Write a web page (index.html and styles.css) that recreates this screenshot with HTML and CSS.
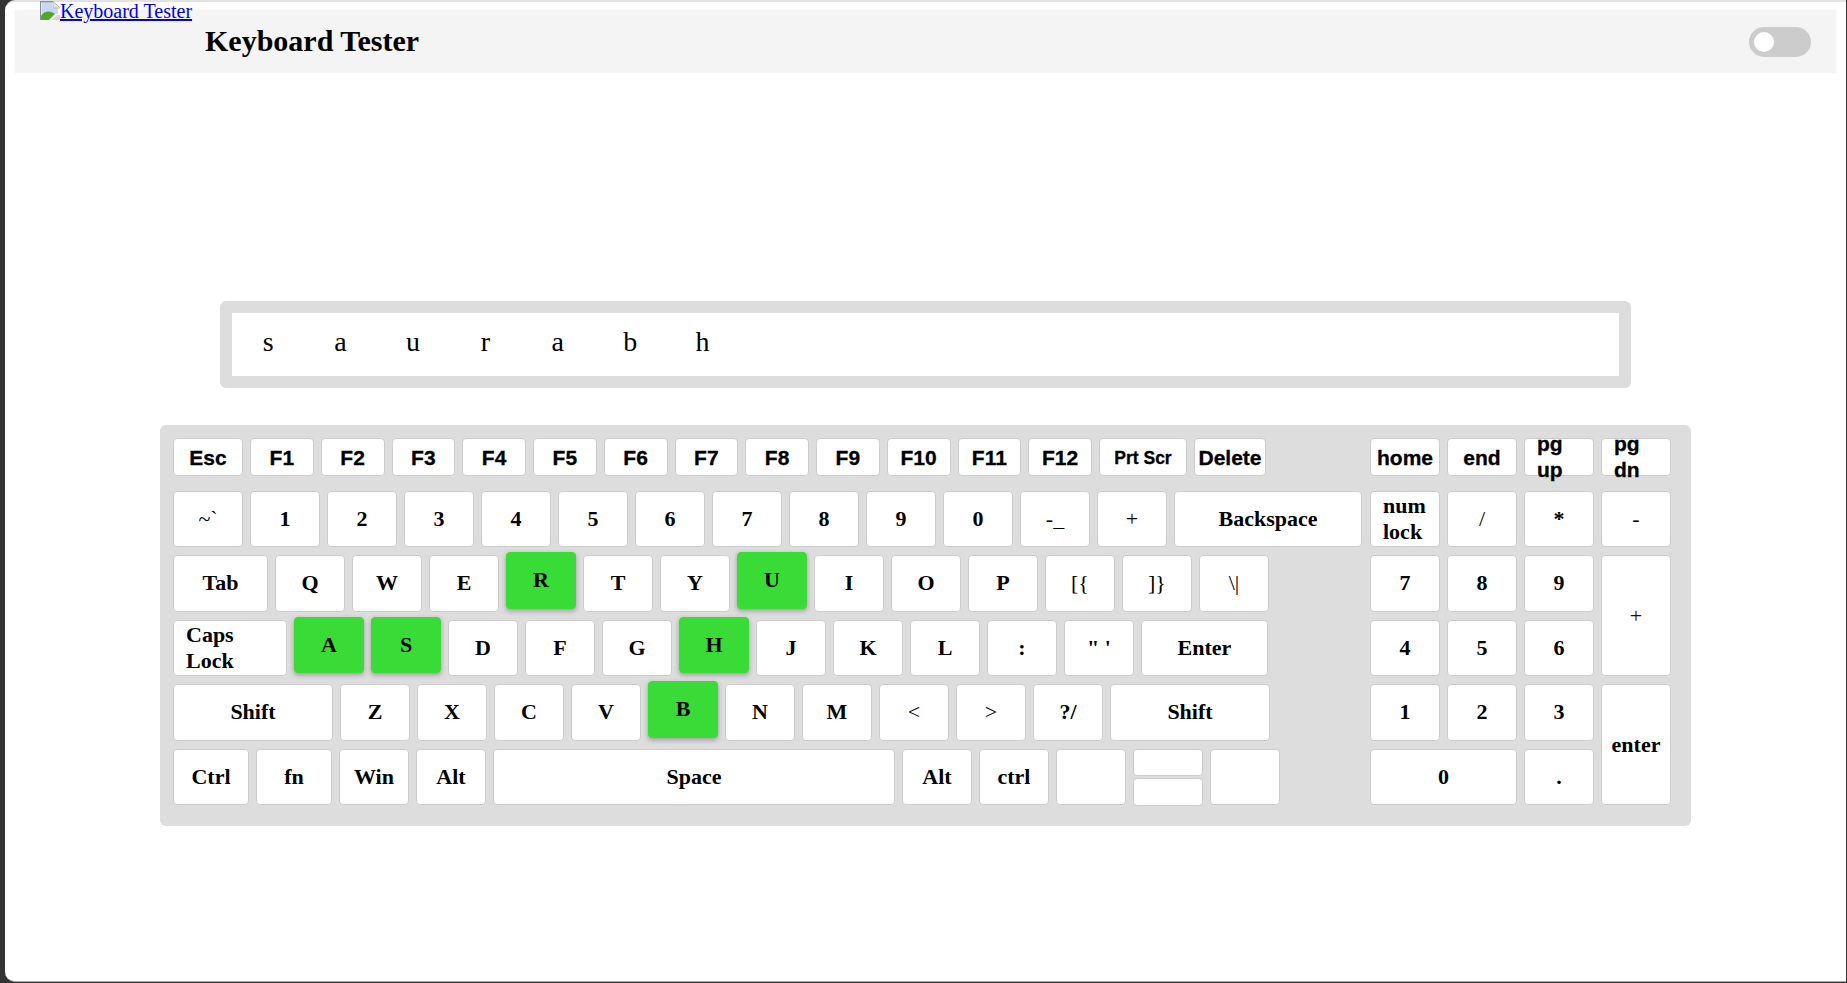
FILE: index.html
```html
<!DOCTYPE html>
<html lang="en">
<head>
    <meta charset="UTF-8">
    <meta name="viewport" content="width=device-width, initial-scale=1.0">
    <title>Keyboard Tester</title>
    <link rel="stylesheet" href="styles.css">
</head>
<body>
    <div class="window">
        <a class="logo" href="#">
            <svg class="broken-img" width="20" height="19" viewBox="0 0 20 19">
                <path d="M0 0H13L20 7V19H0Z" fill="#fff"/>
                <path d="M2 1H12V7H18V13H2Z" fill="#c6d8f5"/>
                <path d="M13 0V7H20Z" fill="#e4e4e4" stroke="#b0b0b0" stroke-width="0.8"/>
                <path d="M1 19V15C5 9 11 10 15 13L9 19Z" fill="#4fa82c"/>
                <path d="M11 19L17 14H20V19Z" fill="#d8d8d8"/>
                <path d="M0.6 19V0.6H13" fill="none" stroke="#8c8c8c" stroke-width="1.2"/>
            </svg>Keyboard Tester</a>

        <header class="header">
            <h1>Keyboard Tester</h1>
            <div class="toggle"><span class="knob"></span></div>
        </header>

        <div class="typed">
            <span>s</span><span>a</span><span>u</span><span>r</span><span>a</span><span>b</span><span>h</span>
        </div>

        <div class="keyboard">
            <div class="main-keys">
                <div class="row row-fn">
                    <div class="key sans">Esc</div>
                    <div class="key sans fn">F1</div>
                    <div class="key sans fn">F2</div>
                    <div class="key sans fn">F3</div>
                    <div class="key sans fn">F4</div>
                    <div class="key sans fn">F5</div>
                    <div class="key sans fn">F6</div>
                    <div class="key sans fn">F7</div>
                    <div class="key sans fn">F8</div>
                    <div class="key sans fn">F9</div>
                    <div class="key sans fn">F10</div>
                    <div class="key sans fn">F11</div>
                    <div class="key sans fn">F12</div>
                    <div class="key sans prt">Prt Scr</div>
                    <div class="key sans del">Delete</div>
                </div>
                <div class="row">
                    <div class="key thin">~`</div>
                    <div class="key">1</div>
                    <div class="key">2</div>
                    <div class="key">3</div>
                    <div class="key">4</div>
                    <div class="key">5</div>
                    <div class="key">6</div>
                    <div class="key">7</div>
                    <div class="key">8</div>
                    <div class="key">9</div>
                    <div class="key">0</div>
                    <div class="key thin">-_</div>
                    <div class="key thin">+</div>
                    <div class="key backspace">Backspace</div>
                </div>
                <div class="row">
                    <div class="key tab">Tab</div>
                    <div class="key">Q</div>
                    <div class="key">W</div>
                    <div class="key">E</div>
                    <div class="key active">R</div>
                    <div class="key">T</div>
                    <div class="key">Y</div>
                    <div class="key active">U</div>
                    <div class="key">I</div>
                    <div class="key">O</div>
                    <div class="key">P</div>
                    <div class="key thin">[{</div>
                    <div class="key thin">]}</div>
                    <div class="key thin">\|</div>
                </div>
                <div class="row">
                    <div class="key caps">Caps Lock</div>
                    <div class="key active">A</div>
                    <div class="key active">S</div>
                    <div class="key">D</div>
                    <div class="key">F</div>
                    <div class="key">G</div>
                    <div class="key active">H</div>
                    <div class="key">J</div>
                    <div class="key">K</div>
                    <div class="key">L</div>
                    <div class="key">:</div>
                    <div class="key">" '</div>
                    <div class="key enter">Enter</div>
                </div>
                <div class="row">
                    <div class="key shift">Shift</div>
                    <div class="key">Z</div>
                    <div class="key">X</div>
                    <div class="key">C</div>
                    <div class="key">V</div>
                    <div class="key active">B</div>
                    <div class="key">N</div>
                    <div class="key">M</div>
                    <div class="key thin">&lt;</div>
                    <div class="key thin">&gt;</div>
                    <div class="key">?/</div>
                    <div class="key shift">Shift</div>
                </div>
                <div class="row">
                    <div class="key ctrl">Ctrl</div>
                    <div class="key ctrl">fn</div>
                    <div class="key">Win</div>
                    <div class="key">Alt</div>
                    <div class="key space">Space</div>
                    <div class="key">Alt</div>
                    <div class="key">ctrl</div>
                    <div class="key"></div>
                    <div class="arrows">
                        <div class="key"></div>
                        <div class="key"></div>
                    </div>
                    <div class="key"></div>
                </div>
            </div>

            <div class="numpad">
                <div class="key sans">home</div>
                <div class="key sans">end</div>
                <div class="key sans wrap">pg up</div>
                <div class="key sans wrap">pg dn</div>
                <div class="key wrap">num lock</div>
                <div class="key thin">/</div>
                <div class="key">*</div>
                <div class="key thin">-</div>
                <div class="key">7</div>
                <div class="key">8</div>
                <div class="key">9</div>
                <div class="key thin tall plus">+</div>
                <div class="key">4</div>
                <div class="key">5</div>
                <div class="key">6</div>
                <div class="key">1</div>
                <div class="key">2</div>
                <div class="key">3</div>
                <div class="key tall">enter</div>
                <div class="key zero">0</div>
                <div class="key">.</div>
            </div>
        </div>
    </div>
</body>
</html>
```

FILE: styles.css
```css
* {
    box-sizing: border-box;
}
html, body {
    height: 100%;
}
body {
    margin: 0;
    background: #333;
    font-family: "Liberation Serif", "Times New Roman", serif;
    overflow: hidden;
}
.window {
    position: relative;
    height: 982px;
    margin: 0 1px 0 5px;
    padding: 8px 10px 0;
    background: white;
    border-top: 2px solid #e2e2e2;
    border-bottom: 1px solid #aaa;
    border-radius: 10px 0 0 10px;
}
.logo {
    position: absolute;
    left: 35px;
    top: -2px;
    font-size: 20px;
    color: #0000ee;
    line-height: 23px;
}
.broken-img {
    vertical-align: -2px;
}
.header {
    display: flex;
    align-items: center;
    justify-content: space-between;
    height: 63px;
    padding: 0 25px 0 190px;
    background: #f4f4f4;
    box-shadow: 0 0 5px rgba(0, 0, 0, 0.03);
}
h1 {
    margin: 0 0 2px;
    font-size: 30px;
    color: black;
}
.toggle {
    position: relative;
    width: 62px;
    height: 30px;
    border-radius: 15px;
    background: #ccc;
}
.knob {
    position: absolute;
    left: 5px;
    top: 5px;
    width: 20px;
    height: 20px;
    border-radius: 50%;
    background: white;
}
.typed {
    display: flex;
    align-items: center;
    width: 1411px;
    height: 87px;
    margin: 228px auto 0;
    padding-bottom: 5px;
    border: 12px solid #ddd;
    border-radius: 6px;
    font-size: 28px;
}
.typed span {
    width: 72.4px;
    text-align: center;
}
.keyboard {
    display: flex;
    justify-content: space-between;
    width: 1531px;
    height: 401px;
    margin: 37px auto 0;
    padding: 13px 20px 0 13px;
    background: #ddd;
    border-radius: 6px;
}
.row {
    display: flex;
    gap: 7px;
    height: 56.5px;
    margin-bottom: 8px;
}
.row-fn {
    height: 38px;
    margin-bottom: 14.7px;
}
.key {
    display: flex;
    align-items: center;
    justify-content: center;
    flex: none;
    width: 70px;
    background: white;
    border: 1px solid #ccc;
    border-radius: 4px;
    font-size: 22px;
    font-weight: bold;
    line-height: 26px;
    color: black;
}
.sans {
    padding-top: 2px;
    font-family: "Liberation Sans", Arial, sans-serif;
    font-size: 21px;
    -webkit-text-stroke: 0.3px black;
}
.thin {
    font-weight: normal;
}
.fn { width: 63.75px; }
.prt { width: 88px; font-size: 17.5px; }
.del { width: 72px; }
.backspace { width: 188px; }
.tab { width: 95px; }
.caps { width: 114px; }
.enter { width: 127px; }
.shift { width: 160px; }
.ctrl { width: 76px; }
.space { width: 402px; }
.caps, .wrap {
    justify-content: flex-start;
    padding: 0 12px;
}
.active {
    background: #39dc36;
    border-color: #39dc36;
    box-shadow: 0 2px 5px rgba(0, 0, 0, 0.3);
    transform: translateY(-3px);
}
.arrows {
    display: flex;
    flex-direction: column;
    gap: 2px;
    flex: none;
}
.arrows .key {
    height: 27.5px;
}
.numpad {
    display: grid;
    grid-template-columns: repeat(4, 70px);
    grid-template-rows: 44.7px repeat(5, 56.5px);
    column-gap: 7px;
    row-gap: 8px;
}
.numpad > :nth-child(-n+4) {
    margin-bottom: 6.7px;
}
.tall {
    grid-column: 4;
    grid-row: span 2;
}
.zero {
    width: auto;
    grid-column: span 2;
}
.plus {
    color: #400;
}
```
